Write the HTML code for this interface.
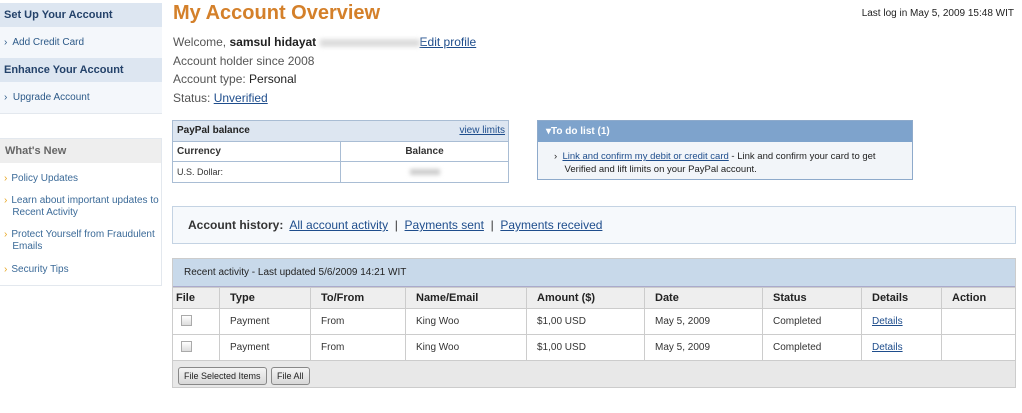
<!DOCTYPE html><html><head><style>
*{margin:0;padding:0;box-sizing:border-box}
body{width:1022px;height:413px;background:#fff;font-family:"Liberation Sans",sans-serif;position:relative;overflow:hidden;color:#333}
.a{position:absolute}
a,.lk{color:#1e4d8c;text-decoration:underline}
.sh{background:#dde6f1;font-weight:bold;font-size:11px;color:#24426a;padding-left:4px;line-height:24px}
.si{background:#f4f7fb;font-size:10px;color:#2d5a88;padding-left:4px;line-height:31px}
.wn{font-size:10px;color:#3b6a98;line-height:12px}
.wn span{color:#e8a620;margin-right:4px}
table{border-collapse:collapse;table-layout:fixed}
.rt td{border:1px solid #ccc;font-size:10px;padding-left:10px;height:26px;color:#333}
.rt th{border:1px solid #ccc;font-size:11px;text-align:left;padding-left:10px;height:21px;background:#eee;color:#222}
.cb{display:inline-block;width:11px;height:11px;border:1px solid #aaa;background:linear-gradient(#fff,#ddd)}
.btn{display:inline-block;border:1px solid #888;border-radius:3px;background:linear-gradient(#f4f4f4,#d8d8d8);font-size:9px;padding:3px 5px;color:#222}
</style></head><body>
<div class="a" style="left:0;top:3px;width:162px">
<div class="sh">Set Up Your Account</div>
<div class="si">›&nbsp; Add Credit Card</div>
<div class="sh">Enhance Your Account</div>
<div class="si" style="border-bottom:1px solid #e3e8ee">›&nbsp; Upgrade Account</div>
</div>
<div class="a" style="left:0;top:138px;width:162px;height:148px;border:1px solid #e3e8ee;border-left:none">
<div style="background:#eee;color:#666;font-weight:bold;font-size:11px;line-height:24px;padding-left:5px">What's New</div>
<div class="wn" style="position:absolute;left:4px;top:34px"><span>›</span>Policy Updates</div>
<div class="wn" style="position:absolute;left:4px;top:56px;width:158px"><span>›</span>Learn about important updates to<br>&nbsp;&nbsp;&nbsp;Recent Activity</div>
<div class="wn" style="position:absolute;left:4px;top:90px;width:158px"><span>›</span>Protect Yourself from Fraudulent<br>&nbsp;&nbsp;&nbsp;Emails</div>
<div class="wn" style="position:absolute;left:4px;top:125px"><span>›</span>Security Tips</div>
</div>
<div class="a" style="left:173px;top:2px;font-size:20px;font-weight:bold;color:#d4802a">My Account Overview</div>
<div class="a" style="right:8px;top:8px;font-size:10px;color:#222">Last log in May 5, 2009 15:48 WIT</div>
<div class="a" style="left:173px;top:33px;font-size:12px;line-height:18.5px;color:#555">
Welcome, <b style="color:#222">samsul hidayat</b> <span style="display:inline-block;width:100px;height:8px;background:#ddd;filter:blur(2px);vertical-align:middle"></span><a>Edit profile</a><br>
Account holder since 2008<br>Account type: <span style="color:#222">Personal</span><br>Status: <a>Unverified</a></div>
<div class="a" style="left:172px;top:120px;width:337px;height:63px;border:1px solid #a9bdd4">
<div style="background:#dde6f1;height:21px;font-size:10px;font-weight:bold;line-height:20px;padding-left:4px;color:#222;border-bottom:1px solid #a9bdd4">PayPal balance<a style="float:right;font-weight:normal;margin-right:3px">view limits</a></div>
<div style="height:20px;font-size:10px;font-weight:bold;line-height:20px;border-bottom:1px solid #a9bdd4;display:flex"><div style="width:168px;padding-left:4px;border-right:1px solid #a9bdd4">Currency</div><div style="flex:1;text-align:center">Balance</div></div>
<div style="height:20px;font-size:9px;line-height:20px;display:flex"><div style="width:168px;padding-left:4px;border-right:1px solid #a9bdd4">U.S. Dollar:</div><div style="flex:1;text-align:center"><span style="display:inline-block;width:30px;height:6px;background:#ccc;filter:blur(2px)"></span></div></div>
</div>
<div class="a" style="left:537px;top:120px;width:376px;height:60px;border:1px solid #8eaacb;background:#f2f5f9">
<div style="background:#7ea3cc;height:21px;color:#fff;font-size:10px;font-weight:bold;line-height:21px;padding-left:8px">▾To do list (1)</div>
<div style="font-size:9.5px;color:#222;padding:8px 0 0 16px;line-height:13px">›&nbsp; <a>Link and confirm my debit or credit card</a> - Link and confirm your card to get<br>&nbsp;&nbsp;&nbsp;&nbsp;Verified and lift limits on your PayPal account.</div>
</div>
<div class="a" style="left:172px;top:206px;width:844px;height:38px;border:1px solid #c4d3e3;background:#f6f9fc;font-size:12px;line-height:36px;padding-left:15px;color:#333">
<b>Account history:</b>&nbsp; <a>All account activity</a> &nbsp;<span style="color:#333">|</span>&nbsp; <a>Payments sent</a> &nbsp;|&nbsp; <a>Payments received</a></div>
<div class="a" style="left:172px;top:258px;width:844px;height:130px;background:#e8e8e8;border:1px solid #ccc">
<div style="background:#c8d9ea;height:28px;font-size:10px;line-height:28px;padding-left:11px;color:#222;border-bottom:1px solid #aac">Recent activity - Last updated 5/6/2009 14:21 WIT</div>
<table class="rt" style="width:844px;margin-left:-1px;background:#fff">
<colgroup><col style="width:47px"><col style="width:91px"><col style="width:95px"><col style="width:121px"><col style="width:118px"><col style="width:118px"><col style="width:99px"><col style="width:80px"><col></colgroup>
<tr><th style="padding-left:3px">File</th><th>Type</th><th>To/From</th><th>Name/Email</th><th>Amount ($)</th><th>Date</th><th>Status</th><th>Details</th><th>Action</th></tr>
<tr><td style="padding-left:8px"><span class="cb"></span></td><td>Payment</td><td>From</td><td>King Woo</td><td>$1,00 USD</td><td>May 5, 2009</td><td>Completed</td><td><a>Details</a></td><td></td></tr>
<tr><td style="padding-left:8px"><span class="cb"></span></td><td>Payment</td><td>From</td><td>King Woo</td><td>$1,00 USD</td><td>May 5, 2009</td><td>Completed</td><td><a>Details</a></td><td></td></tr>
</table>
<div style="padding:5px 0 0 5px"><span class="btn">File Selected Items</span> <span class="btn">File All</span></div>
</div>
</body></html>
